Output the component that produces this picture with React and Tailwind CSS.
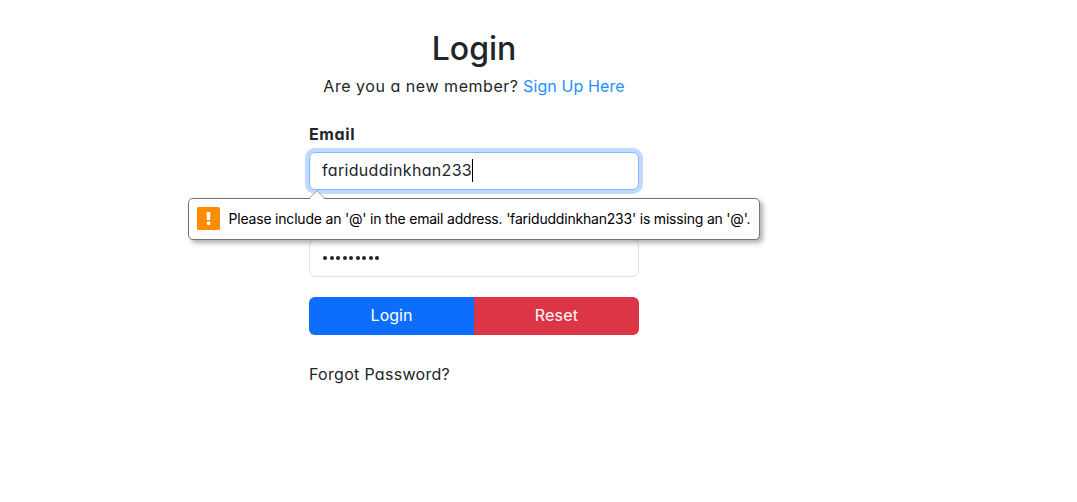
function ValidationBubble() {
  return (
    <div
      role="alert"
      className="absolute top-[46px] left-[-121px] z-10 flex h-[42px] w-[572px] items-center rounded-[5px] border border-[#757575] bg-white pl-2 text-black shadow-[3px_3px_5px_rgba(0,0,0,0.32)]"
    >
      <svg className="absolute -top-[9px] left-[119px]" width="18" height="10" viewBox="0 0 18 10">
        <path d="M1 10 L9 1 L17 10 Z" fill="#fff" />
        <path d="M1 8.5 L9 0.8 L17 8.5" fill="none" stroke="#a0a0a0" />
      </svg>
      <svg className="-mt-px shrink-0" width="23" height="23" viewBox="0 0 23 23">
        <rect width="23" height="23" rx="1.5" fill="#ff8c00" />
        <path d="M9.6 5h3.9l-.4 8h-3.1z" fill="#fff" />
        <rect x="9.8" y="14.6" width="3.5" height="3.4" rx="1" fill="#fff" />
      </svg>
      <span className="ml-[8.5px] text-[14px] leading-5 tracking-[-0.2px] whitespace-nowrap">
        Please include an '@' in the email address. 'fariduddinkhan233' is missing an '@'.
      </span>
    </div>
  );
}

export default function App() {
  return (
    <main className="h-[502px] overflow-hidden bg-white pl-[309px] font-['Inter',sans-serif] text-[16px] text-[#212529]">
      <form className="flex w-[330px] flex-col pt-[29px] [&>*]:[font-feature-settings:'cv11'_1]" onSubmit={(e) => e.preventDefault()} noValidate>
        <h1 className="text-center text-[32px] leading-10 font-medium">Login</h1>
        <p className="mt-[5px] text-center leading-6 whitespace-nowrap">
          <span className="tracking-[0.54px]">Are you a new member?</span>{" "}
          <a href="#" className="tracking-[0.1px] text-[#1e90ff]">Sign Up Here</a>
        </p>
        <label className="mt-6 self-start leading-6 font-bold tracking-[0.6px]">Email</label>
        <div className="relative mt-[6px]">
          <div className="flex h-[38px] items-center rounded-md border border-[#86b7fe] bg-white px-3 shadow-[0_0_0_4px_#c2daff]">
            <span className="-mt-0.5 tracking-[0.32px]">fariduddinkhan233</span>
            <span className="-mt-px h-[23px] w-px bg-black" />
          </div>
          <div className="[font-feature-settings:normal]">
            <ValidationBubble />
          </div>
        </div>
        <div className="mt-[49px] flex h-[38px] items-center gap-[2.5px] rounded-md border border-[#dee2e6] bg-white pl-[13px]">
          {Array.from({ length: 9 }, (_, i) => (
            <span key={i} className="size-1 rounded-full bg-[#212529]" />
          ))}
        </div>
        <div className="mt-5 flex h-[38px] overflow-hidden rounded-md text-white">
          <button type="submit" className="flex-1 bg-[#0d6efd] pb-0.5">Login</button>
          <button type="reset" className="flex-1 bg-[#dc3545] pb-0.5 tracking-[0.2px]">Reset</button>
        </div>
        <a href="#" className="mt-[27px] self-start leading-6 tracking-[0.3px]">Forgot Password?</a>
      </form>
    </main>
  );
}
